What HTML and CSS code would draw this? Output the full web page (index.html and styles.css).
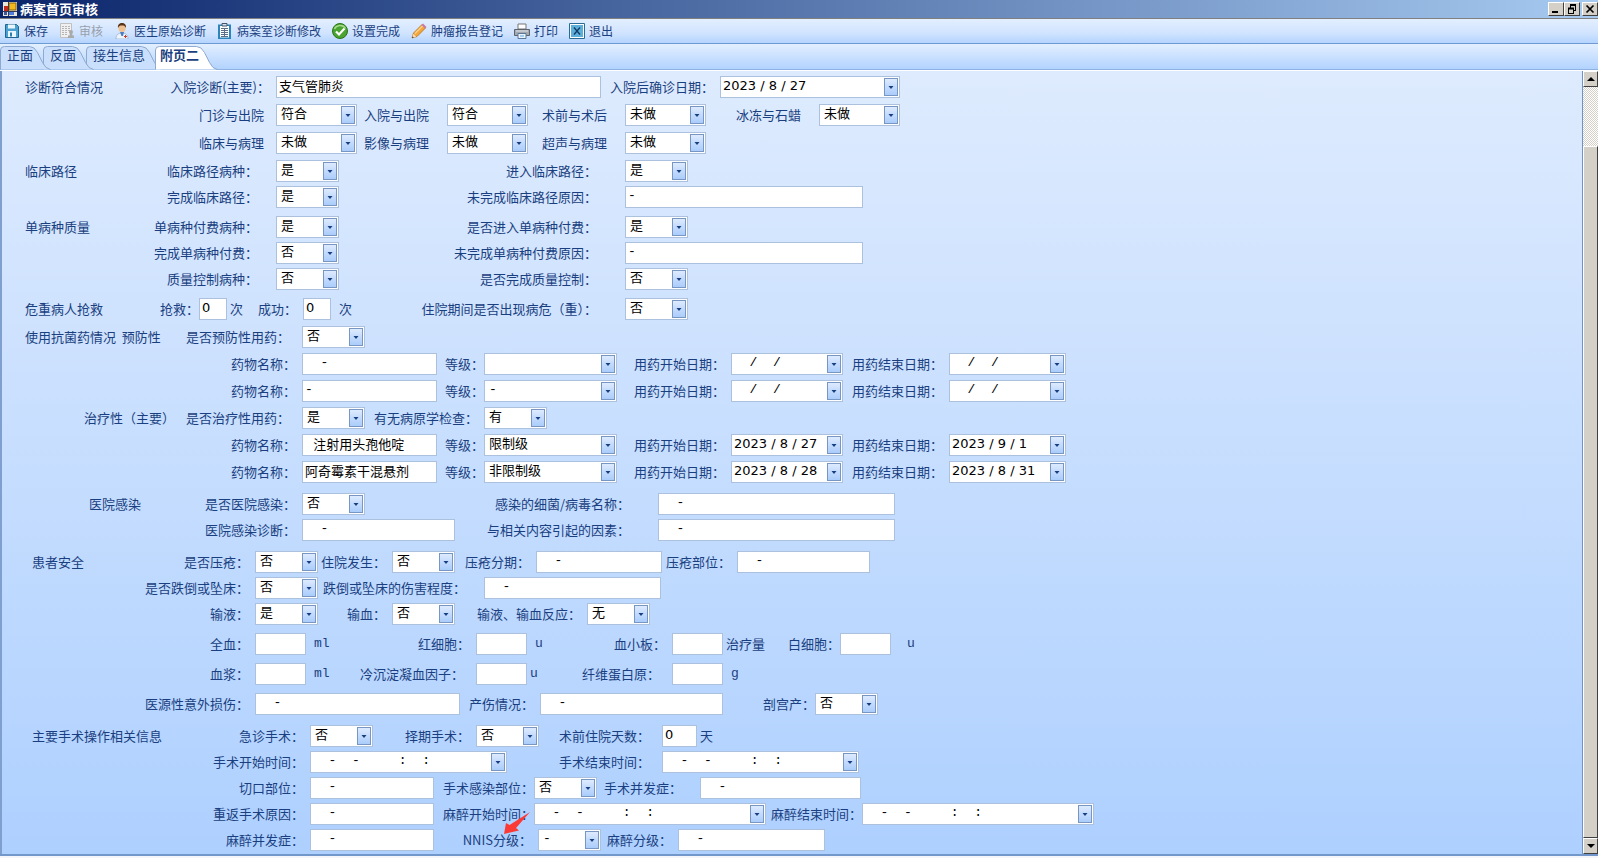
FILE: index.html
```html
<!doctype html>
<html lang="zh-CN">
<head>
    <meta charset="UTF-8">
    <meta name="viewport" content="width=device-width, initial-scale=1.0">
    <title>病案首页审核</title>
    <link rel="stylesheet" href="styles.css">
</head>
<body>
    <header class="titlebar">
        <svg class="app-icon" width="14" height="16" viewBox="0 0 14 16">
            <rect x="0" y="1" width="14" height="14" fill="#e8e4d8"/>
            <rect x="1" y="5" width="4" height="5" fill="#c22b1c"/>
            <rect x="6" y="2" width="7" height="7" fill="#f3b81f" stroke="#8a6408"/>
            <rect x="1" y="11" width="3" height="3" fill="#3c5a9c"/>
            <rect x="6" y="11" width="5" height="3" fill="#4d7ede"/>
            <path d="M0 10.500h14M5.500 1v14" stroke="#333a55" fill="none"/>
        </svg>
        <h1>病案首页审核</h1>
        <div class="win-buttons">
            <button type="button" aria-label="最小化"><svg width="12" height="10"><path d="M2 8h6" stroke="#000" stroke-width="2"/></svg></button>
            <button type="button" aria-label="还原"><svg width="12" height="10"><path d="M4 1h6M4.500 1v3M9.500 1v5M7 6.500h3M2.500 4v5.500M7.500 4v5.500M2 9.500h6" stroke="#000" fill="none"/><path d="M4 1h6M2 4.500h6" stroke="#000" stroke-width="2"/></svg></button>
            <button type="button" class="close" aria-label="关闭"><svg width="12" height="10"><path d="M2.500 1.500l7 7M9.500 1.500l-7 7" stroke="#000" stroke-width="1.700"/></svg></button>
        </div>
    </header>

    <nav class="toolbar">
        <button type="button">
            <svg width="16" height="16" viewBox="0 0 16 16"><path d="M1.500 1.500h11l2 2v11h-13z" fill="#4aa0d0" stroke="#1f6690"/><path d="M4 1.500h7v4H4z" fill="#e9f6fd"/><path d="M4 8h8v6H4z" fill="#e9f6fd"/><path d="M6 9.500h2v4H6z" fill="#2d7fae"/></svg>
            保存</button>
        <button type="button" disabled>
            <svg width="16" height="16" viewBox="0 0 16 16"><path d="M1.500.5h11v14h-11z" fill="#f0f0f0" stroke="#c0c0c0"/><path d="M3 3.500h8M3 5.500h8M3 7.500h8M3 9.500h5M3 11.500h5" stroke="#b5b5b5" stroke-dasharray="2 1"/><circle cx="12" cy="9" r="2" fill="#aaa"/><path d="M11 10h2l.5 2.500h1.500V15H9v-2.500h1.500z" fill="#aaa"/></svg>
            审核</button>
        <button type="button">
            <svg width="16" height="16" viewBox="0 0 16 16"><path d="M2 16c0-4 2-6 6-6s6 2 6 6z" fill="#eef4fb" stroke="#8fa9c8" stroke-width=".7"/><path d="M6 9h4l-1 4H7.500z" fill="#4c7dc0"/><circle cx="8" cy="5.500" r="3.500" fill="#f0c190"/><path d="M4 5C3.500 1.500 5.500 0 8 0s4.500 1.500 4 5c-1-2-2-2.500-4-2.500S5 3 4 5z" fill="#5a3414"/><path d="M11.500 12v3M10 13.500h3" stroke="#c83c30"/></svg>
            医生原始诊断</button>
        <button type="button">
            <svg width="16" height="16" viewBox="0 0 16 16"><path d="M1 1.500h13V16H1z" fill="#2c84bd"/><path d="M3 3h9v11.500H3z" fill="#fff"/><path d="M5 .5h5V3H5z" fill="#d6e4f0" stroke="#456"/><path d="M4 5.500h7M4 7.500h7M4 9.500h7M4 11.500h7M4 13.500h7M7.500 5v9" stroke="#5d6f88"/></svg>
            病案室诊断修改</button>
        <button type="button">
            <svg width="16" height="16" viewBox="0 0 16 16"><circle cx="8" cy="8" r="7.500" fill="#4ba330" stroke="#2b7417"/><path d="M2.500 6C4 2 11 1 13.500 5.500" stroke="#a7da89" stroke-width="1.500" fill="none"/><path d="M4 8.500l3 3 5.500-6" stroke="#fff" stroke-width="2.200" fill="none"/></svg>
            设置完成</button>
        <button type="button">
            <svg width="16" height="16" viewBox="0 0 16 16"><path d="M1 15l1.500-5L11 1.500 14.500 5 6 13.500z" fill="#f5a63a" stroke="#b5701a" stroke-width=".8"/><path d="M4 10.500l8-8" stroke="#fbd28a" stroke-width="1.500"/><path d="M1 15l1.300-4.200 2.900 2.900z" fill="#f5dfbb"/><path d="M1 15l.5-1.800 1.300 1.300z" fill="#333"/><path d="M10.500 2L12 .5 15.500 4 14 5.500z" fill="#c97aa8"/></svg>
            肿瘤报告登记</button>
        <button type="button">
            <svg width="16" height="16" viewBox="0 0 16 16"><path d="M4 1h8v5H4z" fill="#fff" stroke="#777"/><path d="M.5 6.500h15v6H.5z" fill="#a3a9b1" stroke="#5d646d"/><path d="M2 8h12" stroke="#e2e6ea"/><path d="M4 10.500h8v5H4z" fill="#e9f4fe" stroke="#5c7796"/><path d="M6 13h4" stroke="#5ba0dd"/></svg>
            打印</button>
        <button type="button">
            <svg width="16" height="16" viewBox="0 0 16 16"><path d="M.5.5h15v15H.5z" fill="#fff" stroke="#2c6c94"/><path d="M2 2h12v12H2z" fill="#5bafd8"/><path d="M5 4.500l6 7M11 4.500l-6 7" stroke="#123a66" stroke-width="1.300"/></svg>
            退出</button>
    </nav>

    <div class="tabs" role="tablist">
        <button type="button" role="tab" class="tab tab-1">
            <svg width="52" height="24" viewBox="0 0 52 24"><path d="M.5 23.500V4q0-3.500 4-3.500h25q5 0 8 6l5 10q3 6.500 8 7"/></svg>
            <span>正面</span></button>
        <button type="button" role="tab" class="tab tab-2">
            <svg width="52" height="24" viewBox="0 0 52 24"><path d="M.5 23.500V4q0-3.500 4-3.500h25q5 0 8 6l5 10q3 6.500 8 7"/></svg>
            <span>反面</span></button>
        <button type="button" role="tab" class="tab tab-3">
            <svg width="78" height="24" viewBox="0 0 78 24"><path d="M.5 23.500V4q0-3.500 4-3.500h51q5 0 8 6l5 10q3 6.500 8 7"/></svg>
            <span>接生信息</span></button>
        <button type="button" role="tab" class="tab tab-4 active" aria-selected="true">
            <svg width="64" height="24" viewBox="0 0 64 24"><path d="M.5 23.500V4q0-3.500 4-3.500h37q5 0 8 6l5 10q3 6.500 8 7"/></svg>
            <span>附页二</span></button>
    </div>

    <main class="panel">
        <form class="form">
            <section class="group airy">
                <div class="row diag-main">
                    <h2>诊断符合情况</h2>
                    <label for="ryzd">入院诊断(主要)：</label>
                    <input type="text" id="ryzd" value="支气管肺炎">
                    <label for="qzrq">入院后确诊日期：</label>
                    <input type="text" id="qzrq" class="combo" value="2023 / 8 / 27">
                </div>
                <div class="row diag">
                    <label class="loose first" for="mzcy">门诊与出院</label>
                    <select id="mzcy"><option>符合</option></select>
                    <label class="far" for="rycy">入院与出院</label>
                    <select id="rycy"><option>符合</option></select>
                    <label class="far" for="sqsh">术前与术后</label>
                    <select id="sqsh"><option>未做</option></select>
                    <label class="far" for="bdsl">冰冻与石蜡</label>
                    <select id="bdsl"><option>未做</option></select>
                </div>
                <div class="row diag">
                    <label class="loose first" for="lcbl">临床与病理</label>
                    <select id="lcbl"><option>未做</option></select>
                    <label class="far" for="yxbl">影像与病理</label>
                    <select id="yxbl"><option>未做</option></select>
                    <label class="far" for="csbl">超声与病理</label>
                    <select id="csbl"><option>未做</option></select>
                </div>
            </section>

            <section class="group gap-sm">
                <div class="row path">
                    <h2>临床路径</h2>
                    <label class="far" for="ljbz">临床路径病种：</label>
                    <select id="ljbz" class="short"><option>是</option></select>
                    <label class="wide" for="jrlj">进入临床路径：</label>
                    <select id="jrlj" class="short"><option>是</option></select>
                </div>
                <div class="row path">
                    <label class="far first" for="wclj">完成临床路径：</label>
                    <select id="wclj" class="short"><option>是</option></select>
                    <label class="wide" for="wwclj">未完成临床路径原因：</label>
                    <input type="text" id="wwclj" class="mask" value="-">
                </div>
            </section>

            <section class="group">
                <div class="row path">
                    <h2>单病种质量</h2>
                    <label class="far" for="dbzff">单病种付费病种：</label>
                    <select id="dbzff" class="short"><option>是</option></select>
                    <label class="wide" for="jrdbz">是否进入单病种付费：</label>
                    <select id="jrdbz" class="short"><option>是</option></select>
                </div>
                <div class="row path">
                    <label class="far first" for="wcdbz">完成单病种付费：</label>
                    <select id="wcdbz" class="short"><option>否</option></select>
                    <label class="wide" for="wwcdbz">未完成单病种付费原因：</label>
                    <input type="text" id="wwcdbz" class="mask" value="-">
                </div>
                <div class="row path">
                    <label class="far first" for="zlkz">质量控制病种：</label>
                    <select id="zlkz" class="short"><option>否</option></select>
                    <label class="wide" for="wczlkz">是否完成质量控制：</label>
                    <select id="wczlkz" class="short"><option>否</option></select>
                </div>
            </section>

            <section class="group">
                <div class="row rescue">
                    <h2>危重病人抢救</h2>
                    <label class="tight" for="qj">抢救：</label>
                    <input type="text" id="qj" value="0">
                    <span class="unit near">次</span>
                    <label for="cg">成功：</label>
                    <input type="text" id="cg" value="0">
                    <span class="unit">次</span>
                    <label class="wide" for="bw">住院期间是否出现病危（重）：</label>
                    <select id="bw"><option>否</option></select>
                </div>
            </section>

            <section class="group gap-sm roomy">
                <div class="row drug">
                    <h2>使用抗菌药情况&nbsp; 预防性</h2>
                    <label class="loose" for="yfyy">是否预防性用药：</label>
                    <select id="yfyy" class="short"><option>否</option></select>
                </div>
                <div class="row drug">
                    <label class="first" for="yw1">药物名称：</label>
                    <input type="text" id="yw1" class="mask" value="  -">
                    <label class="tight" for="dj1">等级：</label>
                    <select id="dj1"><option></option></select>
                    <label for="ks1">用药开始日期：</label>
                    <input type="text" id="ks1" class="combo mask" value="  /  /">
                    <label for="js1">用药结束日期：</label>
                    <input type="text" id="js1" class="combo mask" value="  /  /">
                </div>
                <div class="row drug">
                    <label class="first" for="yw2">药物名称：</label>
                    <input type="text" id="yw2" class="mask" value="-">
                    <label class="tight" for="dj2">等级：</label>
                    <select id="dj2" class="mask"><option>-</option></select>
                    <label for="ks2">用药开始日期：</label>
                    <input type="text" id="ks2" class="combo mask" value="  /  /">
                    <label for="js2">用药结束日期：</label>
                    <input type="text" id="js2" class="combo mask" value="  /  /">
                </div>
                <div class="row drug">
                    <h2 class="to-right">治疗性（主要）</h2>
                    <label class="loose" for="zlyy">是否治疗性用药：</label>
                    <select id="zlyy" class="short"><option>是</option></select>
                    <label for="byx">有无病原学检查：</label>
                    <select id="byx" class="short"><option>有</option></select>
                </div>
                <div class="row drug">
                    <label class="first" for="yw3">药物名称：</label>
                    <input type="text" id="yw3" value="  注射用头孢他啶">
                    <label class="tight" for="dj3">等级：</label>
                    <select id="dj3"><option>限制级</option></select>
                    <label for="ks3">用药开始日期：</label>
                    <input type="text" id="ks3" class="combo" value="2023 / 8 / 27">
                    <label for="js3">用药结束日期：</label>
                    <input type="text" id="js3" class="combo" value="2023 / 9 / 1">
                </div>
                <div class="row drug">
                    <label class="first" for="yw4">药物名称：</label>
                    <input type="text" id="yw4" value="阿奇霉素干混悬剂">
                    <label class="tight" for="dj4">等级：</label>
                    <select id="dj4"><option>非限制级</option></select>
                    <label for="ks4">用药开始日期：</label>
                    <input type="text" id="ks4" class="combo" value="2023 / 8 / 28">
                    <label for="js4">用药结束日期：</label>
                    <input type="text" id="js4" class="combo" value="2023 / 8 / 31">
                </div>
            </section>

            <section class="group gap-lg">
                <div class="row infect">
                    <h2 class="indent-lg">医院感染</h2>
                    <label for="yygr">是否医院感染：</label>
                    <select id="yygr" class="short"><option>否</option></select>
                    <label class="wide" for="xj">感染的细菌/病毒名称：</label>
                    <input type="text" id="xj" class="mask" value="  -">
                </div>
                <div class="row infect">
                    <label class="first" for="grzd">医院感染诊断：</label>
                    <input type="text" id="grzd" class="mask" value="  -">
                    <label class="wide" for="ys">与相关内容引起的因素：</label>
                    <input type="text" id="ys" class="mask" value="  -">
                </div>
            </section>

            <section class="group gap-lg">
                <div class="row sore">
                    <h2 class="indent">患者安全</h2>
                    <label for="yc">是否压疮：</label>
                    <select id="yc"><option>否</option></select>
                    <label for="zyfs">住院发生：</label>
                    <select id="zyfs"><option>否</option></select>
                    <label for="ycfq">压疮分期：</label>
                    <input type="text" id="ycfq" class="mask" value="  -">
                    <label for="ycbw">压疮部位：</label>
                    <input type="text" id="ycbw" class="mask" value="  -">
                </div>
                <div class="row fall">
                    <label class="first" for="dd">是否跌倒或坠床：</label>
                    <select id="dd"><option>否</option></select>
                    <label class="far" for="ddcd">跌倒或坠床的伤害程度：</label>
                    <input type="text" id="ddcd" class="mask" value="  -">
                </div>
                <div class="row infusion">
                    <label class="first" for="sy">输液：</label>
                    <select id="sy"><option>是</option></select>
                    <label for="sx">输血：</label>
                    <select id="sx"><option>否</option></select>
                    <label for="syfy">输液、输血反应：</label>
                    <select id="syfy"><option>无</option></select>
                </div>
            </section>

            <section class="group spread">
                <div class="row blood">
                    <label class="first" for="qx">全血：</label>
                    <input type="text" id="qx">
                    <span class="unit latin">ml</span>
                    <label for="hxb">红细胞：</label>
                    <input type="text" id="hxb">
                    <span class="unit latin">u</span>
                    <label for="xxb">血小板：</label>
                    <input type="text" id="xxb">
                    <span class="unit near">治疗量</span>
                    <label class="tight" for="bxb">白细胞：</label>
                    <input type="text" id="bxb">
                    <span class="unit latin apart">u</span>
                </div>
                <div class="row blood">
                    <label class="first" for="xj2">血浆：</label>
                    <input type="text" id="xj2">
                    <span class="unit latin">ml</span>
                    <label class="loose" for="lcd">冷沉淀凝血因子：</label>
                    <input type="text" id="lcd">
                    <span class="unit latin near">u</span>
                    <label class="loose" for="xwdb">纤维蛋白原：</label>
                    <input type="text" id="xwdb">
                    <span class="unit latin">g</span>
                </div>
                <div class="row injury">
                    <label class="first" for="yyx">医源性意外损伤：</label>
                    <input type="text" id="yyx" class="mask" value="  -">
                    <label for="csqk">产伤情况：</label>
                    <input type="text" id="csqk" class="mask" value="  -">
                    <label class="tight" for="pgc">剖宫产：</label>
                    <select id="pgc"><option>否</option></select>
                </div>
            </section>

            <section class="group gap-lg">
                <div class="row op-type">
                    <h2 class="indent">主要手术操作相关信息</h2>
                    <label for="jzss">急诊手术：</label>
                    <select id="jzss"><option>否</option></select>
                    <label for="zqss">择期手术：</label>
                    <select id="zqss"><option>否</option></select>
                    <label class="loose" for="sqts">术前住院天数：</label>
                    <input type="text" id="sqts" value="0">
                    <span class="unit near">天</span>
                </div>
                <div class="row op-time">
                    <label class="first" for="sskk">手术开始时间：</label>
                    <input type="text" id="sskk" class="combo mask" value="  -  -     :  :">
                    <label class="loose" for="ssjs">手术结束时间：</label>
                    <input type="text" id="ssjs" class="combo mask" value="  -  -     :  :">
                </div>
                <div class="row op-site">
                    <label class="first" for="qkbw">切口部位：</label>
                    <input type="text" id="qkbw" class="mask" value="  -">
                    <label class="tight" for="ssgr">手术感染部位：</label>
                    <select id="ssgr"><option>否</option></select>
                    <label class="far" for="ssbf">手术并发症：</label>
                    <input type="text" id="ssbf" class="mask" value="  -">
                </div>
                <div class="row op-anes">
                    <label class="first" for="cfyy">重返手术原因：</label>
                    <input type="text" id="cfyy" class="mask" value="  -">
                    <label class="tight" for="mzks">麻醉开始时间：</label>
                    <input type="text" id="mzks" class="combo mask" value="  -  -     :  :">
                    <label class="tight" for="mzjs">麻醉结束时间：</label>
                    <input type="text" id="mzjs" class="combo mask" value="  -  -     :  :">
                </div>
                <div class="row op-grade">
                    <label class="first" for="mzbf">麻醉并发症：</label>
                    <input type="text" id="mzbf" class="mask" value="  -">
                    <label class="marked" for="nnis">NNIS分级：
                        <svg class="arrow" width="28" height="24" viewBox="0 0 28 24"><path d="M1 23L3 12l3.500 2L27 1 13 17l3 2.500z" fill="#fb3a35"/></svg>
                    </label>
                    <select id="nnis" class="mask"><option>-</option></select>
                    <label for="mzfj">麻醉分级：</label>
                    <input type="text" id="mzfj" class="mask" value="  -">
                </div>
            </section>
        </form>

        <div class="scrollbar">
            <button type="button" aria-label="向上滚动"><svg width="8" height="4"><path d="M0 4l4-4 4 4z"/></svg></button>
            <div class="track"></div>
            <div class="thumb"></div>
            <button type="button" aria-label="向下滚动"><svg width="8" height="4"><path d="M0 0l4 4 4-4z"/></svg></button>
        </div>
    </main>
</body>
</html>
```

FILE: styles.css
```css
* {
    box-sizing: border-box;
}
body {
    display: flex;
    flex-direction: column;
    min-height: 100vh;
    margin: 0;
    padding-bottom: 2px;
    background: #f4f6fa;
    color: #1a3f80;
    font-family: "Noto Sans CJK SC", sans-serif;
    font-size: 13px;
    line-height: 18px;
}
h1, h2 {
    margin: 0;
    font-size: 13px;
}
button {
    padding: 0;
    border: 0;
    background: none;
    color: inherit;
    font: inherit;
}

/* title bar */
.titlebar {
    display: flex;
    align-items: center;
    height: 18px;
    padding: 0 0 0 3px;
    background: linear-gradient(to right, #0a246a, #a6caf0);
    color: #fff;
}
.titlebar h1 {
    flex: 1;
    padding-left: 3px;
}
.win-buttons {
    display: flex;
}
.win-buttons button,
.scrollbar button {
    display: flex;
    align-items: center;
    justify-content: center;
    background: #d4d0c8;
    border: 1px solid;
    border-color: #fff #404040 #404040 #fff;
}
.win-buttons button {
    width: 16px;
    height: 14px;
}
.win-buttons .close {
    margin-left: 2px;
}

/* toolbar */
.toolbar {
    display: flex;
    align-items: center;
    gap: 11px;
    height: 26px;
    padding-left: 4px;
    border-top: 1px solid #808080;
    border-bottom: 1px solid #6f9bd3;
    background: linear-gradient(#e3efff, #d0e3ff 60%, #b4d4ff);
}
.toolbar button {
    display: flex;
    align-items: center;
    gap: 4px;
    font-size: 12px;
}
.toolbar button:disabled {
    color: #98a0ac;
}

/* tabs */
.tabs {
    display: flex;
    height: 26px;
    padding-top: 2px;
    border-bottom: 1px solid #8db2e3;
    background: linear-gradient(#e3efff, #b2d3ff);
}
.tab {
    position: relative;
    height: 24px;
    padding: 0 0 7px 7px;
    text-align: left;
}
.tab svg {
    position: absolute;
    left: 0;
    top: 0;
    fill: #cadffb;
    stroke: #8faad0;
}
.tab span {
    position: relative;
}
.tab-1 {
    z-index: 3;
    width: 43px;
}
.tab-2 {
    z-index: 2;
    width: 43px;
}
.tab-3 {
    z-index: 1;
    width: 69px;
}
.tab-4 {
    z-index: 4;
    width: 64px;
    padding-left: 5px;
    font-weight: bold;
}
.tab.active svg {
    fill: #fff;
}

/* panel */
.panel {
    display: flex;
    flex: 1;
    border-top: 1px solid #fff;
    border-bottom: 2px solid #7197cb;
}
.form {
    flex: 1;
    padding: 5px 0 0 23px;
    border-left: 2px solid #7f9fce;
    border-right: 1px solid #6d93c8;
    background: linear-gradient(#deebfe, #aed0ff);
}
.group {
    display: grid;
    gap: 4px;
    margin-top: 8px;
}
.group:first-child {
    margin-top: 0;
}
.group.gap-sm {
    margin-top: 6px;
}
.group.gap-lg {
    margin-top: 10px;
}
.group.roomy {
    gap: 5px;
}
.group.airy {
    gap: 6px;
}
.group.spread {
    gap: 8px;
}

/* rows: heading, label, control, label, control ... */
.row {
    display: grid;
    align-items: center;
    height: 22px;
}
.diag-main { grid-template-columns: 110px 141px 325px 119px 180px; }
.diag { grid-template-columns: 110px 141px 81px 90px 81px 97px 81px 113px 81px; }
.path { grid-template-columns: 110px 141px 63px 286px 238px; }
.rescue { grid-template-columns: 110px 64px 28px 30px 46px 28px 30px 264px 63px; }
.drug { grid-template-columns: 150px 127px 135px 47px 133px 114px 112px 106px 117px; }
.infect { grid-template-columns: 150px 127px 153px 203px 237px; }
.sore { grid-template-columns: 110px 120px 63px 74px 63px 81px 126px 75px 133px; }
.fall { grid-template-columns: 110px 120px 63px 166px 177px; }
.infusion { grid-template-columns: 110px 120px 63px 74px 63px 132px 63px; }
.blood { grid-template-columns: 110px 120px 51px 50px 120px 51px 45px 100px 51px 60px 57px 51px 50px; }
.injury { grid-template-columns: 110px 120px 205px 80px 183px 92px 63px; }
.op-type { grid-template-columns: 150px 135px 63px 103px 63px 123px 35px 30px; }
.op-time { grid-template-columns: 150px 135px 197px 155px 197px; }
.op-site { grid-template-columns: 150px 135px 124px 100px 63px 103px 161px; }
.op-anes { grid-template-columns: 150px 135px 124px 100px 232px 96px 232px; }
.op-grade { grid-template-columns: 150px 135px 124px 104px 63px 77px 147px; }

.row h2 {
    font-weight: normal;
    white-space: nowrap;
}
.row .indent {
    padding-left: 7px;
}
.row .indent-lg {
    padding-left: 64px;
}
.row .to-right {
    justify-self: end;
}
.row label {
    justify-self: end;
    padding-right: 6px;
    white-space: nowrap;
}
.row .first {
    grid-column: 2;
}
.row .tight {
    padding-right: 0;
}
.row .loose {
    padding-right: 12px;
}
.row .far {
    padding-right: 18px;
}
.row .wide {
    padding-right: 28px;
}
.unit {
    padding-left: 8px;
    white-space: nowrap;
}
.unit.latin {
    font-family: "Liberation Mono", monospace;
}
.unit.near {
    padding-left: 3px;
}
.unit.apart {
    padding-left: 16px;
}

input, select {
    width: 100%;
    min-width: 0;
    height: 22px;
    margin: 0;
    padding: 0 2px 3px 2px;
    border: 1px solid #abc1de;
    border-radius: 0;
    background: #fff;
    color: #000;
    font-family: "DejaVu Sans", "Noto Sans CJK SC", sans-serif;
    font-size: 13px;
}
select {
    appearance: none;
    padding-left: 4px;
}
select, .combo {
    background: #fff url('data:image/svg+xml,<svg xmlns="http://www.w3.org/2000/svg" width="14" height="18"><defs><linearGradient id="g" x2="0" y2="1"><stop offset="0" stop-color="%23dfecff"/><stop offset=".45" stop-color="%23c6dcfd"/><stop offset="1" stop-color="%23a9ccfb"/></linearGradient></defs><rect x=".5" y=".5" width="13" height="17" fill="url(%23g)" stroke="%237896c4"/><path d="M4.500 8h5L7 11z" fill="%23153f82"/></svg>') no-repeat right 1px center;
}
select.short {
    width: 63px;
}
.mask {
    font-family: "Liberation Mono", "Noto Sans CJK SC", monospace;
}

.marked {
    position: relative;
}
.arrow {
    position: absolute;
    left: 40px;
    bottom: 14px;
}

/* scrollbar */
.scrollbar {
    display: flex;
    flex-direction: column;
    width: 15px;
    background: #d4d0c8;
}
.scrollbar button {
    height: 16px;
}
.track {
    flex: 59;
    background: repeating-conic-gradient(#fff 0 25%, #d4d0c8 0 50%) 0 0 / 2px 2px;
}
.thumb {
    flex: 692;
    border: 1px solid;
    border-color: #fff #404040 #404040 #fff;
}
```
